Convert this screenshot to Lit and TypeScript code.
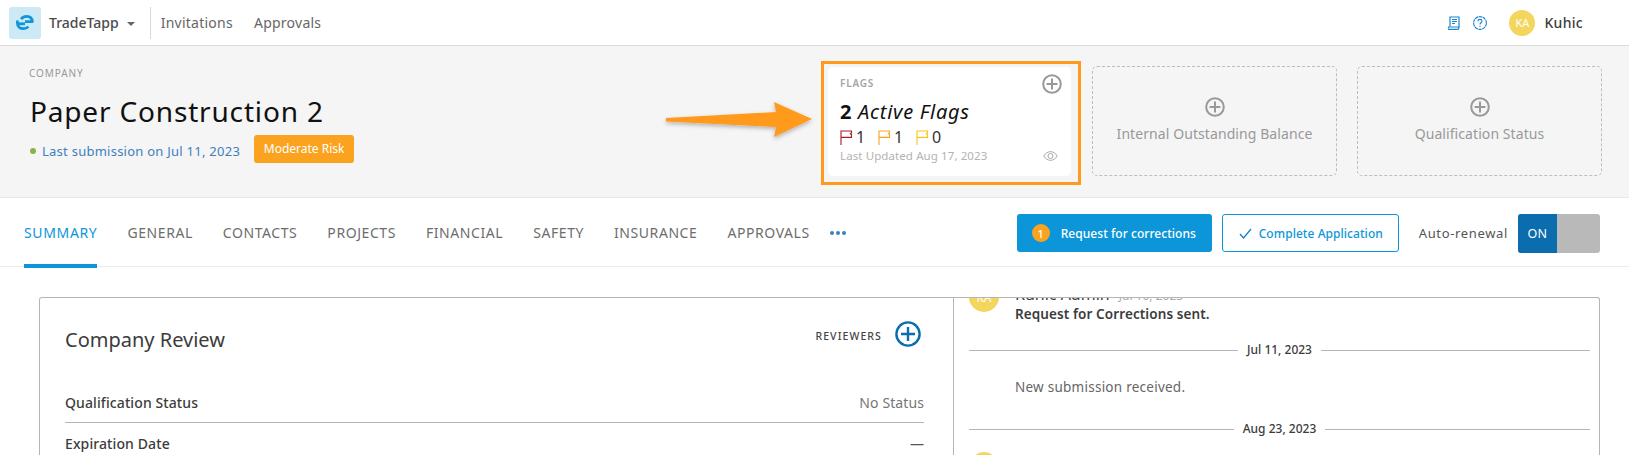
import { LitElement, html, css } from "lit";
import { customElement } from "lit/decorators.js";

const plus = (size: number, color: string, sw: number) => html`<svg class="ic" width=${size} height=${size} viewBox="0 0 20 20" fill="none" stroke=${color} stroke-width=${sw}>
  <circle cx="10" cy="10" r=${10 - sw / 2 - 0.2}></circle><path d="M10 4.6v10.8M4.6 10h10.8"></path></svg>`;

const flag = (color: string) => html`<svg class="flag" width="13" height="15" viewBox="0 0 13 15" fill="none" stroke=${color} stroke-width="1.1">
  <path d="M1 15V1h10.5v1.8l-1.2.9 1.2.9V7.4H1"></path></svg>`;

@customElement("app-root")
export class AppRoot extends LitElement {
  static styles = css`
    :host { display: block; width: 1629px; height: 455px; overflow: hidden; background: #fff; font-family: "Noto Sans", "Liberation Sans", sans-serif; color: #3c3c3c; }
    * { box-sizing: border-box; }
    svg { display: block; flex: none; }
    .top { height: 46px; border-bottom: 1px solid #dcdcdc; display: flex; align-items: center; padding: 0 0 0 9px; }
    .logo { width: 32px; height: 32px; border-radius: 3px; background: #cde9f6; display: flex; align-items: center; justify-content: center; margin-right: 8px; }
    .brand { font-size: 14px; font-weight: 500; color: #4a4a4a; letter-spacing: 0; }
    .caret { width: 0; height: 0; border: 4px solid transparent; border-top: 4px solid #666; border-bottom: 0; margin: 2px 15px 0 8px; }
    .sep { width: 1px; height: 32px; background: #d8d8d8; margin-right: 10px; }
    .nav { font-size: 14px; color: #666; letter-spacing: 0.25px; margin-right: 21px; }
    .spacer { flex: 1; }
    .help { margin: 0 22px 0 13px; }
    .avatar { width: 26px; height: 26px; border-radius: 50%; background: #f3d65d; color: #fff; font-size: 11px; display: flex; align-items: center; justify-content: center; }
    .user { font-size: 14px; font-weight: 500; margin: 0 46px 0 9px; letter-spacing: 0.3px; }

    .band { height: 152px; background: #f5f5f5; border-bottom: 1px solid #e8e8e8; display: flex; padding: 20px 27px 0 29px; }
    .info { flex: 1; }
    .eyebrow { font-size: 10px; line-height: 14px; letter-spacing: 0.9px; color: #999; }
    h1 { font-size: 28px; font-weight: 400; line-height: 38px; margin: 12px 0 0 1px; color: #111; letter-spacing: 0.83px; }
    .sub { display: flex; align-items: center; margin-top: 5px; }
    .dot { width: 6px; height: 6px; border-radius: 50%; background: #8ab34a; margin: 3px 6px 0 1px; }
    .last { font-size: 13px; color: #3d80bd; letter-spacing: 0.25px; margin-top: 3px; }
    .risk { width: 100px; height: 28px; margin: 0 0 0 14px; border-radius: 3px; background: #fba31f; color: #fff; font-size: 12px; display: flex; align-items: center; justify-content: center; padding-bottom: 1px; }

    .flags { position: relative; width: 243px; height: 109px; margin: 1px 21px 0 0; background: #fff; border-radius: 5px; padding: 10px 12px; }
    .mark { position: absolute; left: -7px; top: -6px; width: 260px; height: 124px; border: 3px solid #ff9a1e; }
    .arrow { position: absolute; left: -162px; top: 25px; width: 160px; height: 50px; overflow: visible; }
    .fhead { display: flex; justify-content: space-between; align-items: flex-start; font-size: 10px; font-weight: 600; letter-spacing: 0.8px; color: #a5a5a5; line-height: 14px; margin-top: -1px; }
    .fhead .ic { margin: -2px -3px 0 0; }
    .active { font-size: 20px; line-height: 24px; margin-top: 6px; color: #111; font-style: italic; letter-spacing: 0.72px; }
    .active b { font-style: normal; font-weight: 700; }
    .counts { display: flex; align-items: center; font-size: 16px; line-height: 18px; color: #333; margin-top: 4px; }
    .counts span { width: 22px; margin-left: 3px; }
    .upd { display: flex; justify-content: space-between; align-items: center; font-size: 11.5px; color: #b3b3b3; margin-top: 1px; line-height: 18px; padding-right: 1px; letter-spacing: 0.1px; }
    .dash { height: 110px; border: 1px dashed #bdbdbd; border-radius: 5px; display: flex; flex-direction: column; align-items: center; color: #999; font-size: 14px; letter-spacing: 0.08px; padding-top: 30px; }
    .dash .ic { margin-bottom: 7px; }
    .d1 { width: 245px; margin-right: 20px; }
    .d2 { width: 245px; }

    .tabs { height: 69px; border-bottom: 1px solid #ebebeb; display: flex; align-items: center; padding: 2px 29px 0 24px; }
    .tab { position: relative; font-size: 14px; color: #6d6d6d; letter-spacing: 0.57px; margin-right: 30px; line-height: 20px; }
    .tab.on { color: #0c96d9; letter-spacing: 0.65px; }
    .tab.on::after { content: ""; position: absolute; left: 0; right: 0; top: 41px; height: 4px; background: #0c96d9; }
    .more { display: flex; gap: 2px; margin-left: -10px; }
    .more i { width: 4px; height: 4px; border-radius: 50%; background: #3d80bd; }
    .btn { height: 38px; border-radius: 3px; display: flex; align-items: center; font-size: 12px; font-weight: 500; letter-spacing: 0.05px; }
    .primary { width: 195px; background: #0c96d9; color: #fff; padding-left: 15px; margin-right: 10px; }
    .badge { width: 18px; height: 18px; border-radius: 50%; background: #fba31f; font-size: 11px; display: flex; align-items: center; justify-content: center; margin-right: 11px; }
    .outline { width: 177px; border: 1px solid #0c96d9; color: #0c96d9; padding-left: 16px; margin-right: 20px; }
    .outline svg { margin-right: 7px; }
    .auto { font-size: 13px; letter-spacing: 0.65px; color: #555; margin-right: 10px; }
    .toggle { width: 82px; height: 39px; border-radius: 3px; overflow: hidden; background: #b9b9b9; display: flex; }
    .toggle span { width: 39px; background: #0b6cae; color: #fff; font-size: 12.5px; display: flex; align-items: center; justify-content: center; letter-spacing: 0.4px; }

    .body { padding: 30px 29px 0 39px; }
    .card { display: flex; height: 200px; border: 1px solid #b5b5b5; border-bottom: 0; border-radius: 3px 3px 0 0; }
    .left { width: 914px; border-right: 1px solid #b5b5b5; padding: 0 29px 0 25px; }
    .lh { height: 94px; display: flex; justify-content: space-between; padding-top: 23px; }
    h2 { margin: 4px 0 0; font-size: 20px; font-weight: 400; line-height: 30px; color: #3c3c3c; }
    .rev { display: flex; align-items: center; height: 26px; gap: 13px; font-size: 10.5px; font-weight: 500; letter-spacing: 1.1px; color: #444; margin-right: 3px; }
    .rev span { padding-top: 3px; }
    .row { display: flex; justify-content: space-between; align-items: center; font-size: 14px; font-weight: 500; letter-spacing: 0.1px; color: #3c3c3c; height: 20px; }
    .row em { font-style: normal; font-weight: 400; color: #777; }
    .row em.none { font-weight: 500; color: #555; }
    .rule { height: 1px; background: #b5b5b5; margin: 10px 0; }
    .right { flex: 1; overflow: hidden; padding: 0 9px 0 15px; }
    .scroll { margin-top: -16px; }
    .entry { display: flex; height: 48px; }
    .big { width: 30px; height: 30px; border-radius: 50%; background: #f3d65d; color: #fff; font-size: 12px; display: flex; align-items: center; justify-content: center; margin-right: 16px; flex: none; }
    .who { font-size: 16px; line-height: 18px; padding-top: 3px; box-sizing: content-box; color: #3c3c3c; }
    .who small { font-size: 12px; color: #aaa; margin-left: 9px; }
    .msg { font-size: 13.5px; font-weight: 600; line-height: 18px; margin-top: 0; color: #3c3c3c; letter-spacing: 0.1px; }
    .day { display: flex; align-items: center; gap: 9px; font-size: 12px; font-weight: 500; line-height: 18px; color: #3c3c3c; margin-top: 11px; }
    .day::before, .day::after { content: ""; flex: 1; height: 1px; background: #b5b5b5; }
    .note { font-size: 13.5px; line-height: 20px; color: #666; margin: 18px 0 23px 46px; letter-spacing: 0.25px; }
    .tail { width: 30px; height: 30px; border-radius: 50%; background: #f3d65d; margin-top: 14px; }
  `;

  render() {
    const tabs = ["GENERAL", "CONTACTS", "PROJECTS", "FINANCIAL", "SAFETY", "INSURANCE", "APPROVALS"];
    return html`
      <div class="top">
        <div class="logo">
          <svg width="18" height="15" viewBox="0 0 18 15" fill="none" stroke="#0f96d8" stroke-width="2.800">
            <path d="M5 4.200C6.500 2.400 8.500 1.400 10.800 1.400c3.200 0 5.200 2 5.600 5.200H9" stroke-linejoin="round"></path>
            <path d="M1.400 5.500V8c0 3.500 2.600 5.600 6 5.600 2 0 3.600-.5 5-2"></path>
            <path d="M1.400 8.800H9"></path>
          </svg>
        </div>
        <span class="brand">TradeTapp</span><i class="caret"></i><i class="sep"></i>
        <span class="nav">Invitations</span><span class="nav">Approvals</span>
        <span class="spacer"></span>
        <svg width="13" height="14" viewBox="0 0 13 14" fill="none" stroke="#1a85cf" stroke-width="1.200">
          <path d="M3 10.500V1h9v10"></path><path d="M1 13.300h9.500c1 0 1.500-.8 1.500-2.300H1.500v1.300"></path>
          <path d="M5 3.500h5M5 5.500h5M5 7.500h3" stroke-width="1"></path>
        </svg>
        <svg class="help" width="14" height="14" viewBox="0 0 14 14" fill="none" stroke="#1a85cf" stroke-width="1.100">
          <circle cx="7" cy="7" r="6.400" stroke-dasharray="3.500 .5"></circle>
          <path d="M5 5.300c0-1.300 1-1.900 2-1.900s2 .7 2 1.800c0 1.500-2 1.600-2 3.200"></path><path d="M7 9.700v1.200"></path>
        </svg>
        <div class="avatar">KA</div><span class="user">Kuhic</span>
      </div>

      <div class="band">
        <div class="info">
          <div class="eyebrow">COMPANY</div>
          <h1>Paper Construction 2</h1>
          <div class="sub">
            <i class="dot"></i><span class="last">Last submission on Jul 11, 2023</span>
            <span class="risk">Moderate Risk</span>
          </div>
        </div>
        <div class="flags">
          <i class="mark"></i>
          <svg class="arrow" viewBox="0 0 160 50">
            <defs><filter id="s" x="-10%" y="-30%" width="120%" height="170%"><feDropShadow dx="0" dy="2" stdDeviation="2" flood-color="#000" flood-opacity=".28"></feDropShadow></filter></defs>
            <path filter="url(#s)" fill="#ff9a1e" d="M0 26 110 20 108 10 146 27 108 45 110 35 0 29.500Z"></path>
          </svg>
          <div class="fhead"><span>FLAGS</span>${plus(20, "#999", 2)}</div>
          <div class="active"><b>2</b> Active Flags</div>
          <div class="counts">
            ${flag("#a81c22")}<span>1</span>${flag("#fba31f")}<span>1</span>${flag("#f5c518")}<span>0</span>
          </div>
          <div class="upd"><span>Last Updated Aug 17, 2023</span>
            <svg width="15" height="10" viewBox="0 0 15 10" fill="none" stroke="#a9a9a9" stroke-width="1"><path d="M.8 5C2.500 2 4.800.7 7.500.7S12.500 2 14.200 5C12.500 8 10.200 9.300 7.500 9.300S2.500 8 .8 5Z"></path><circle cx="7.500" cy="5" r="2.500"></circle></svg>
          </div>
        </div>
        <div class="dash d1">${plus(20, "#999", 2)}<span>Internal Outstanding Balance</span></div>
        <div class="dash d2">${plus(20, "#999", 2)}<span>Qualification Status</span></div>
      </div>

      <div class="tabs">
        <span class="tab on">SUMMARY</span>
        ${tabs.map((t) => html`<span class="tab">${t}</span>`)}
        <span class="more"><i></i><i></i><i></i></span>
        <span class="spacer"></span>
        <div class="btn primary"><span class="badge">1</span>Request for corrections</div>
        <div class="btn outline">
          <svg width="13" height="11" viewBox="0 0 13 11" fill="none" stroke="#0c7fc4" stroke-width="1.200"><path d="M1 6l3.500 4L12 1"></path></svg>
          Complete Application
        </div>
        <span class="auto">Auto-renewal</span>
        <div class="toggle"><span>ON</span></div>
      </div>

      <div class="body">
        <div class="card">
          <div class="left">
            <div class="lh">
              <h2>Company Review</h2>
              <div class="rev"><span>REVIEWERS</span>
                <svg width="26" height="26" viewBox="0 0 26 26" fill="none" stroke="#0b6cae" stroke-width="2.400"><circle cx="13" cy="13" r="11.600"></circle><path d="M13 6v14M6 13h14"></path></svg>
              </div>
            </div>
            <div class="row"><span>Qualification Status</span><em>No Status</em></div>
            <div class="rule"></div>
            <div class="row"><span>Expiration Date</span><em class="none">—</em></div>
          </div>
          <div class="right">
            <div class="scroll">
              <div class="entry">
                <div class="big">KA</div>
                <div><div class="who">Kuhic Admin<small>Jul 10, 2023</small></div><div class="msg">Request for Corrections sent.</div></div>
              </div>
              <div class="day">Jul 11, 2023</div>
              <div class="note">New submission received.</div>
              <div class="day">Aug 23, 2023</div>
              <div class="tail"></div>
            </div>
          </div>
        </div>
      </div>
    `;
  }
}
